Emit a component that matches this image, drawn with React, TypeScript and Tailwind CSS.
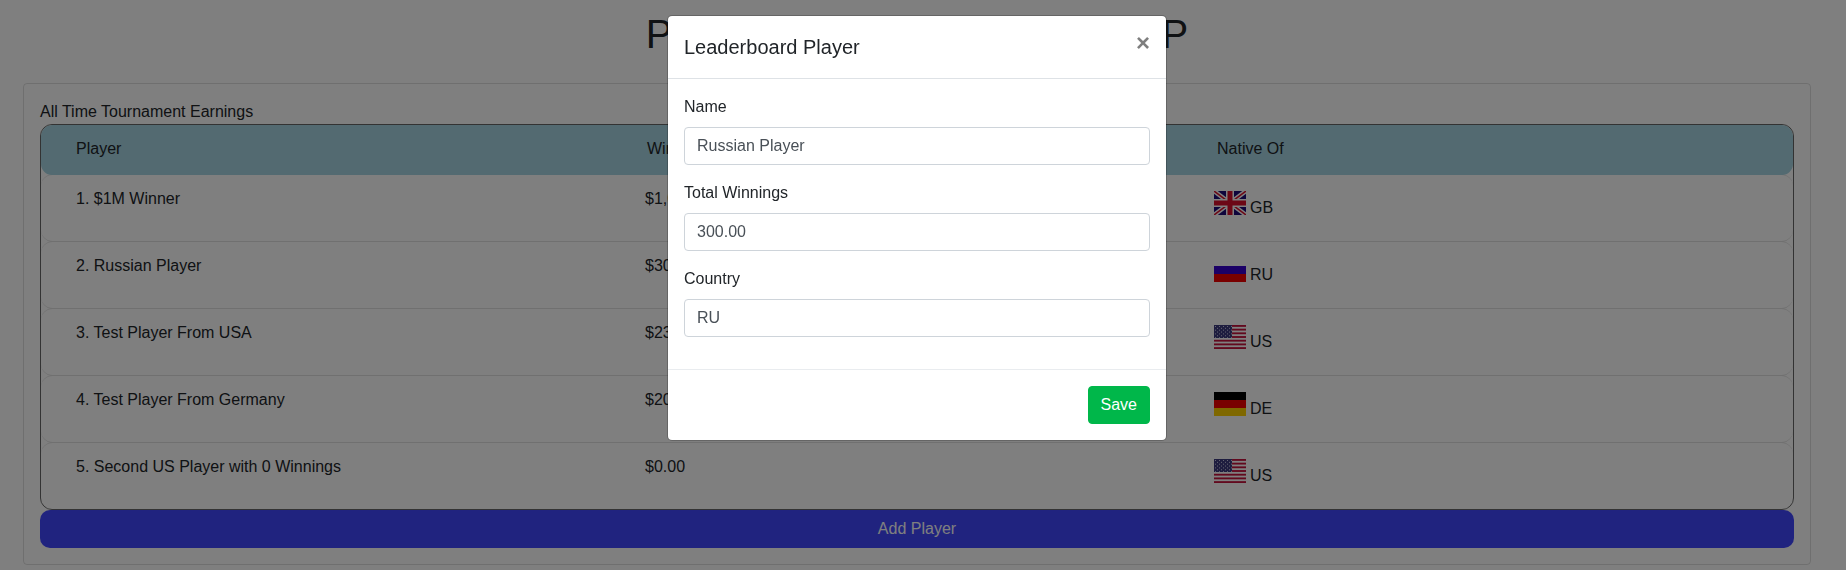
const players = [
  { name: "1. $1M Winner", total: "$1,000,000.00", code: "GB" },
  { name: "2. Russian Player", total: "$300.00", code: "RU" },
  { name: "3. Test Player From USA", total: "$230.00", code: "US" },
  { name: "4. Test Player From Germany", total: "$200.00", code: "DE" },
  { name: "5. Second US Player with 0 Winnings", total: "$0.00", code: "US" },
];

const Flag = ({ code }: { code: string }) => {
  if (code === "GB") {
    return (
      <svg width="32" height="24" viewBox="0 0 32 24" className="my-1 shrink-0">
        <rect width="32" height="24" fill="#1c0a78" />
        <path d="M0 0L32 24M32 0L0 24" stroke="#fff" strokeWidth="4.5" />
        <path d="M0 0L32 24M32 0L0 24" stroke="#d8102c" strokeWidth="1.5" />
        <path d="M16 0V24M0 12H32" stroke="#fff" strokeWidth="8" />
        <path d="M16 0V24M0 12H32" stroke="#d8102c" strokeWidth="5" />
      </svg>
    );
  }
  if (code === "RU") {
    return (
      <svg width="32" height="24" viewBox="0 0 32 24" className="my-1 shrink-0">
        <rect width="32" height="8" fill="#fff" />
        <rect y="8" width="32" height="8" fill="#3600cc" />
        <rect y="16" width="32" height="8" fill="#f20000" />
      </svg>
    );
  }
  if (code === "DE") {
    return (
      <svg width="32" height="24" viewBox="0 0 32 24" className="my-1 shrink-0">
        <rect width="32" height="8" fill="#000" />
        <rect y="8" width="32" height="8" fill="#f20000" />
        <rect y="16" width="32" height="8" fill="#ffd000" />
      </svg>
    );
  }
  const stripes = [0, 1, 2, 3, 4, 5, 6];
  const dots: number[][] = [];
  for (let r = 0; r < 7; r++) {
    for (let c = 0; c < 9; c++) {
      if ((r + c) % 2 === 0) dots.push([1 + c * 2, 1 + r * 1.85]);
    }
  }
  return (
    <svg width="32" height="24" viewBox="0 0 32 24" className="my-1 shrink-0">
      <rect width="32" height="24" fill="#fff" />
      {stripes.map((s) => (
        <rect key={s} y={(s * 24 * 2) / 13} width="32" height={24 / 13} fill="#c4123c" />
      ))}
      <rect width="18" height="13" fill="#3c3b7e" />
      {dots.map((d, i) => (
        <rect key={i} x={d[0]} y={d[1]} width="1" height="1" fill="#c9c9e0" />
      ))}
    </svg>
  );
};

const Field = ({ label, value }: { label: string; value: string }) => {
  return (
    <div className="mb-4">
      <label className="mb-2 block leading-6">{label}</label>
      <input
        readOnly
        value={value}
        className="block h-[38px] w-full rounded border border-[#ced4da] bg-white px-3 text-[#495057] outline-none"
      />
    </div>
  );
};

export default function App() {
  return (
    <div className="relative h-[570px] w-full overflow-hidden bg-white font-['Liberation_Sans',Arial,sans-serif] text-base text-[#212529]">
      <div className="w-[1834px] px-[23px] pt-[10px]">
        <h1 className="mb-[25px] text-center text-[40px] leading-[48px]">POKER LEADERBOARD APP</h1>

        <div className="rounded border border-black/[.125] p-4">
          <div className="leading-6">All Time Tournament Earnings</div>

          {/* Leaderboard */}
          <div className="h-[386px] overflow-hidden rounded-xl border border-[#666666]">
            <div className="relative z-10 grid h-[50px] grid-cols-[571px_570px_1fr] rounded-[11px] bg-[#a6d4e2] pl-[35px] pt-3 leading-6">
              <div>Player</div>
              <div>Winnings</div>
              <div>Native Of</div>
            </div>
            {players.map((p) => (
              <div
                key={p.name}
                className="-mt-px grid h-[68px] grid-cols-[569px_569px_1fr] rounded-xl border-y border-[#e0e0e0] pl-[35px] pt-3 leading-6"
              >
                <div>{p.name}</div>
                <div>{p.total}</div>
                <div className="flex items-start gap-1">
                  <Flag code={p.code} />
                  <span className="mt-[9px]">{p.code}</span>
                </div>
              </div>
            ))}
          </div>

          <button className="h-[38px] w-full rounded-[10px] bg-[#4046fe] text-center text-white">Add Player</button>
        </div>
      </div>

      {/* Modal */}
      <div className="absolute inset-0 z-20 bg-black/50">
        <div className="flex w-[1834px] justify-center pt-[15px]">
          <div className="w-[500px] transform-gpu rounded-[5px] border border-black/20 bg-white bg-clip-padding">
            <div className="flex items-start justify-between border-b border-[#dee2e6] p-4">
              <div className="text-xl leading-[30px]">Leaderboard Player</div>
              <button className="-mt-px text-2xl leading-none font-bold text-black opacity-50">×</button>
            </div>
            <div className="p-4">
              <Field label="Name" value="Russian Player" />
              <Field label="Total Winnings" value="300.00" />
              <Field label="Country" value="RU" />
            </div>
            <div className="flex justify-end border-t border-[#e9ecef] p-4">
              <button className="h-[38px] rounded border border-[#00b74a] bg-[#00b74a] px-3 text-white">Save</button>
            </div>
          </div>
        </div>
      </div>
    </div>
  );
}
